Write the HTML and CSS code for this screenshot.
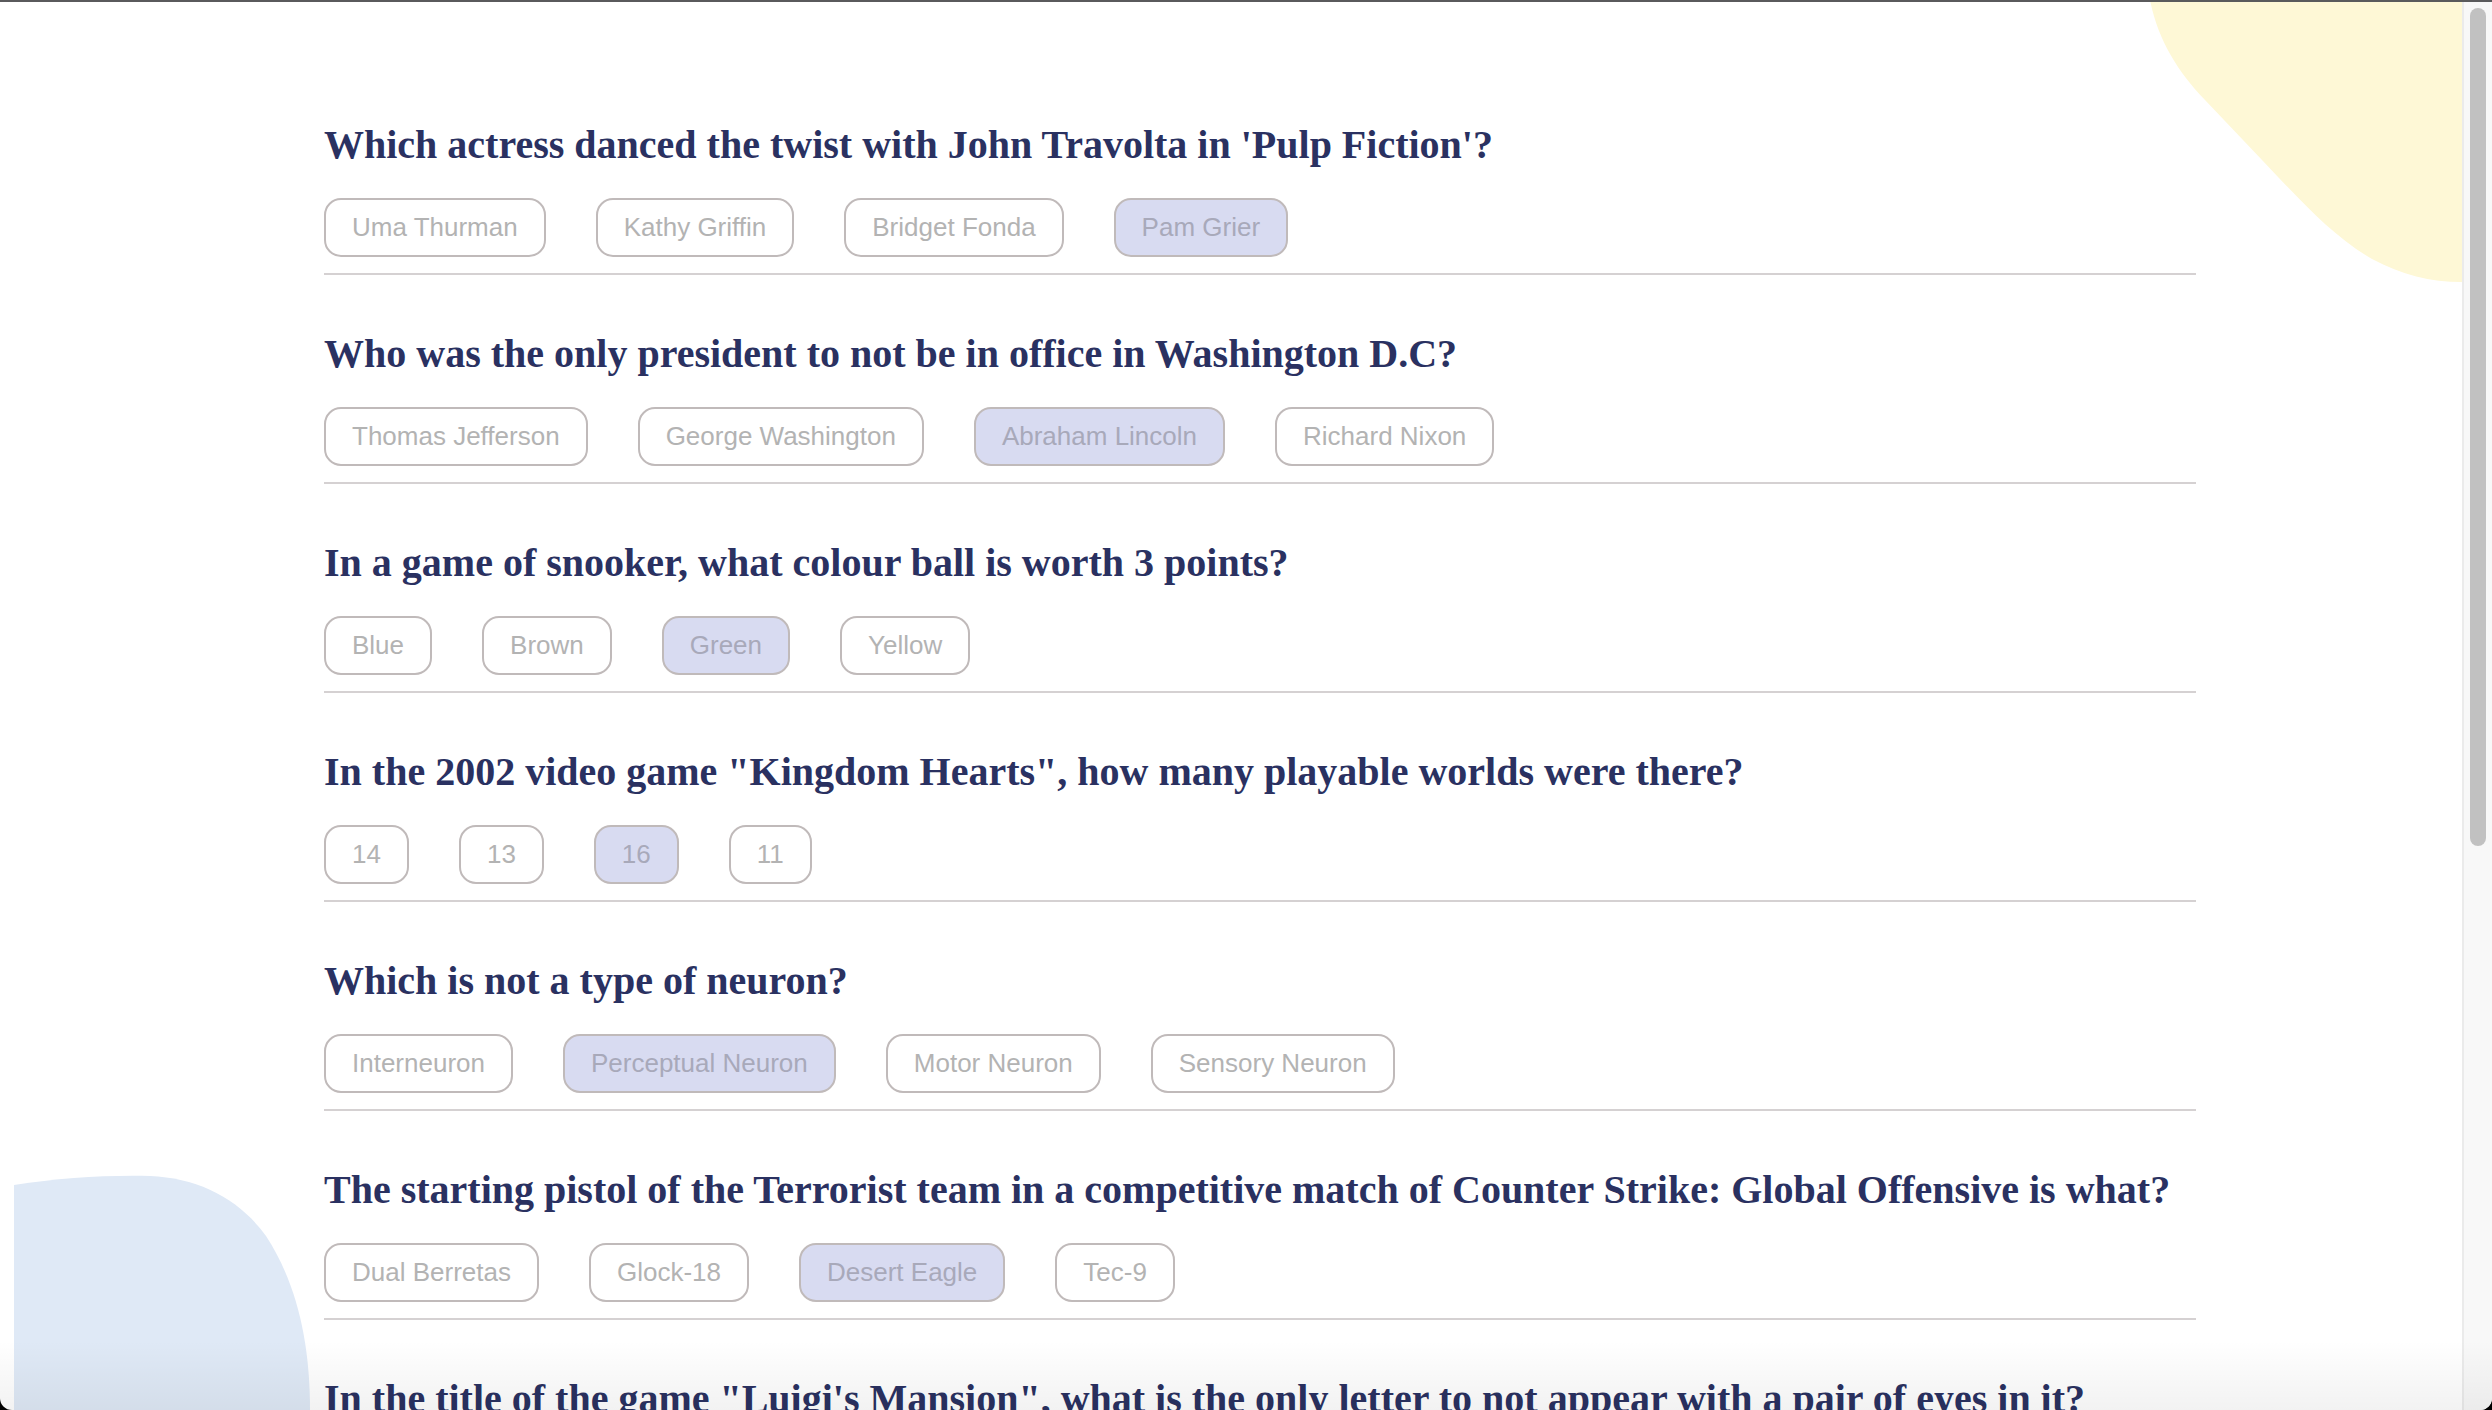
FILE: index.html
```html
<!DOCTYPE html>
<html lang="en">
<head>
<meta charset="utf-8">
<title>Quiz</title>
<link rel="stylesheet" href="styles.css">
</head>
<body>
<div class="window">
  <div class="topbar"></div>
  <div class="viewport">
    <main class="content">
      <svg class="blobs" viewBox="0 2 2462 1408" preserveAspectRatio="none" aria-hidden="true">
        <path fill="#fef8d6" d="M2150 0 C2158 40 2178 72 2205 100 L2262 160 C2300 200 2332 236 2372 259 C2402 275 2430 282 2462 282 V0 Z"/>
        <path fill="#dfe9f6" d="M14 1185 C60 1178 105 1175 150 1176 C200 1178 240 1200 266 1236 C296 1282 310 1340 310 1410 L14 1410 Z"/>
      </svg>
      <div class="quiz">
        <section class="question">
          <h2 class="q-title">Which actress danced the twist with John Travolta in 'Pulp Fiction'?</h2>
          <div class="answers">
            <span class="answer">Uma Thurman</span>
            <span class="answer">Kathy Griffin</span>
            <span class="answer">Bridget Fonda</span>
            <span class="answer selected">Pam Grier</span>
          </div>
        </section>
        <section class="question">
          <h2 class="q-title">Who was the only president to not be in office in Washington D.C?</h2>
          <div class="answers">
            <span class="answer">Thomas Jefferson</span>
            <span class="answer">George Washington</span>
            <span class="answer selected">Abraham Lincoln</span>
            <span class="answer">Richard Nixon</span>
          </div>
        </section>
        <section class="question">
          <h2 class="q-title">In a game of snooker, what colour ball is worth 3 points?</h2>
          <div class="answers">
            <span class="answer">Blue</span>
            <span class="answer">Brown</span>
            <span class="answer selected">Green</span>
            <span class="answer">Yellow</span>
          </div>
        </section>
        <section class="question">
          <h2 class="q-title">In the 2002 video game "Kingdom Hearts", how many playable worlds were there?</h2>
          <div class="answers">
            <span class="answer">14</span>
            <span class="answer">13</span>
            <span class="answer selected">16</span>
            <span class="answer">11</span>
          </div>
        </section>
        <section class="question">
          <h2 class="q-title">Which is not a type of neuron?</h2>
          <div class="answers">
            <span class="answer">Interneuron</span>
            <span class="answer selected">Perceptual Neuron</span>
            <span class="answer">Motor Neuron</span>
            <span class="answer">Sensory Neuron</span>
          </div>
        </section>
        <section class="question">
          <h2 class="q-title">The starting pistol of the Terrorist team in a competitive match of Counter Strike: Global Offensive is what?</h2>
          <div class="answers">
            <span class="answer">Dual Berretas</span>
            <span class="answer">Glock-18</span>
            <span class="answer selected">Desert Eagle</span>
            <span class="answer">Tec-9</span>
          </div>
        </section>
        <section class="question">
          <h2 class="q-title">In the title of the game "Luigi's Mansion", what is the only letter to not appear with a pair of eyes in it?</h2>
          <div class="answers">
            <span class="answer">M</span>
            <span class="answer">L</span>
            <span class="answer">A</span>
            <span class="answer">N</span>
          </div>
        </section>
      </div>
    </main>
    <aside class="scrollbar"><div class="thumb"></div></aside>
  </div>
  <div class="shade"></div>
</div>
</body>
</html>
```
FILE: styles.css
```css
html {
  background: #000;
}
body {
  margin: 0;
  background: #000;
}
.window {
  position: relative;
  width: 2492px;
  height: 1410px;
  overflow: hidden;
  background: #fff;
  border-radius: 0 0 12px 12px;
  display: flex;
  flex-direction: column;
}
.topbar {
  height: 2px;
  background: #5a5a5c;
  flex: none;
}
.viewport {
  flex: 1;
  display: flex;
  min-height: 0;
}
.content {
  flex: 1;
  position: relative;
  overflow: hidden;
}
.blobs {
  position: absolute;
  left: 0;
  top: 0;
  width: 2462px;
  height: 1408px;
}
.quiz {
  position: relative;
  padding: 120px 0 0 324px;
  width: 1872px;
}
.question {
  border-bottom: 2px solid #d5d1d2;
  padding-bottom: 16px;
  margin-bottom: 56px;
}
.q-title {
  margin: 0 0 30px;
  font-family: "Liberation Serif", "Times New Roman", serif;
  font-weight: 700;
  font-size: 40px;
  line-height: 46px;
  color: #2a3161;
  white-space: nowrap;
}
.answers {
  display: flex;
  gap: 50px;
}
.answer {
  display: block;
  padding: 12px 26px;
  border: 2px solid #c0baba;
  border-radius: 17px;
  font-family: "Liberation Sans", Arial, sans-serif;
  font-size: 26px;
  line-height: 31px;
  color: #b3b3b3;
  background: #fff;
}
.answer.selected {
  background: #d8dbf1;
  color: #a8a9ba;
}
.scrollbar {
  flex: none;
  width: 30px;
  box-sizing: border-box;
  border-left: 2px solid #ebebeb;
  background: #f8f8f8;
  padding: 6px 6px 0 6px;
}
.thumb {
  width: 16px;
  height: 838px;
  border-radius: 8px;
  background: #c1c1c1;
}
.shade {
  position: absolute;
  left: 0;
  right: 0;
  bottom: 0;
  height: 70px;
  background: linear-gradient(to bottom, rgba(0,0,0,0), rgba(0,0,0,0.05));
  pointer-events: none;
}
```
